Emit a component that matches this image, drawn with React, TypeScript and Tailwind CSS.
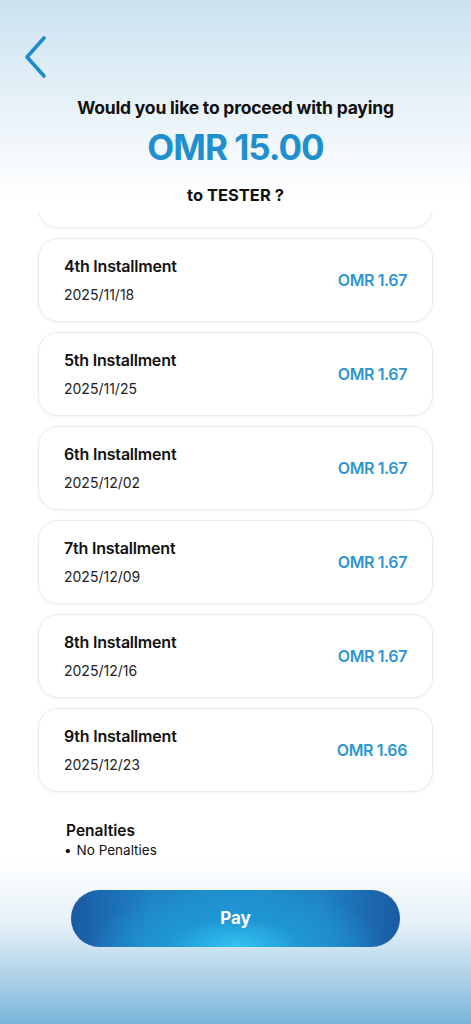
import { useState } from 'react';

const installments = [
  { label: '1st Installment', date: '2025/10/28', amount: 'OMR 1.67' },
  { label: '2nd Installment', date: '2025/11/04', amount: 'OMR 1.67' },
  { label: '3rd Installment', date: '2025/11/11', amount: 'OMR 1.67' },
  { label: '4th Installment', date: '2025/11/18', amount: 'OMR 1.67' },
  { label: '5th Installment', date: '2025/11/25', amount: 'OMR 1.67' },
  { label: '6th Installment', date: '2025/12/02', amount: 'OMR 1.67' },
  { label: '7th Installment', date: '2025/12/09', amount: 'OMR 1.67' },
  { label: '8th Installment', date: '2025/12/16', amount: 'OMR 1.67' },
  { label: '9th Installment', date: '2025/12/23', amount: 'OMR 1.66' },
];

export default function App() {
  const [paid, setPaid] = useState(false);

  return (
    <main
      className="relative w-[471px] h-[1024px] overflow-hidden flex flex-col text-[#111]"
      style={{
        fontFamily: 'Inter, "Noto Sans", sans-serif',
        background:
          'linear-gradient(to bottom, #cbe2f0 0px, #e6f1f8 100px, #ffffff 200px, #ffffff 860px, #e4f0f7 925px, #b5d6ea 970px, #7ab5db 1024px)',
      }}
    >
      {/* Header */}
      <div className="h-[92px] flex items-center pl-[20px] pt-[22px]">
        <button className="w-[30px] h-[46px] flex items-center justify-center">
          <svg width="26" height="44" viewBox="0 0 26 44" fill="none">
            <path d="M22 3 L5 22 L22 41" stroke="#1a8bcb" strokeWidth="3.6" strokeLinecap="round" strokeLinejoin="round" />
          </svg>
        </button>
      </div>

      {/* Title */}
      <div className="flex flex-col items-center">
        <p className="text-[17.5px] font-bold tracking-[-0.2px] leading-[22px] mt-[5px]">
          Would you like to proceed with paying
        </p>
        <p className="text-[35px] font-bold text-[#1f8fce] tracking-[-1px] leading-[36px] mt-[10px]">
          OMR 15.00
        </p>
        <p className="text-[16.5px] font-bold leading-[22px] mt-[19px]">to TESTER ?</p>
      </div>

      {/* Installments list */}
      <div className="mt-[7px] h-[587px] overflow-hidden px-[38px]">
        <div className="-mt-[257px] flex flex-col gap-[10px]">
          {installments.map((item) => (
            <div
              key={item.label}
              className="h-[84px] shrink-0 rounded-[20px] bg-white border border-[#e9ebed] shadow-[0_1px_3px_rgba(0,0,0,0.05)] flex items-center justify-between pl-[25px] pr-[25px]"
            >
              <div className="flex flex-col">
                <span className="text-[16px] font-semibold leading-[20px] tracking-[-0.2px]">{item.label}</span>
                <span className="text-[14px] leading-[18px] mt-[10px] text-[#222]">{item.date}</span>
              </div>
              <span className="text-[16px] font-semibold text-[#2b96d1] tracking-[-0.4px]">{item.amount}</span>
            </div>
          ))}
        </div>
      </div>

      {/* Penalties */}
      <div className="px-[66px] mt-[21px]">
        <p className="text-[15.5px] font-semibold leading-[20px]">Penalties</p>
        <p className="text-[13.5px] leading-[18px] -ml-[2px]">
          <span className="mr-[5px]">•</span>No Penalties
        </p>
      </div>

      {/* Pay button */}
      <div className="px-[71px] mt-[31px]">
        <button
          onClick={() => setPaid(!paid)}
          className="w-full h-[57px] rounded-full text-white text-[17px] font-bold"
          style={{
            background:
              'radial-gradient(ellipse 45% 110% at 50% 100%, #33c4f2 0%, #1f96d4 45%, rgba(31,150,212,0) 100%), linear-gradient(to right, #1a5aa3 0%, #1f84c5 25%, #1f8fcf 50%, #1f84c5 75%, #1a5aa3 100%)',
          }}
        >
          Pay
        </button>
      </div>
    </main>
  );
}
